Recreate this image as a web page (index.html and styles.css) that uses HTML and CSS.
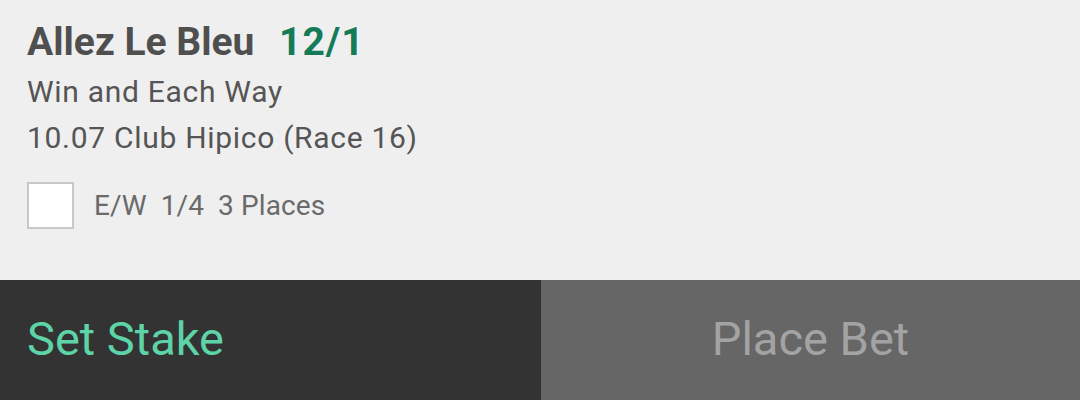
FILE: index.html
```html
<!DOCTYPE html>
<html>

<head>
  <link rel="stylesheet" href="styles.css">
</head>

<body>
  <div class="slip">
    <div class="details">
      <h1 class="selection">Allez Le Bleu <span class="odds">12/1</span></h1>
      <div class="bet-type">Win and Each Way</div>
      <div class="event">10.07 Club Hipico (Race 16)</div>

      <label class="each-way">
        <span class="box"></span>
        <span class="terms">E/W&nbsp; 1/4&nbsp; 3 Places</span>
      </label>
    </div>

    <div class="actions">
      <button class="stake-btn">Set Stake</button>
      <button class="place-btn">Place Bet</button>
    </div>
  </div>
</body>

</html>
```

FILE: styles.css
```css
* {
  margin: 0;
  padding: 0;
  box-sizing: border-box;
}

body {
  width: 1080px;
  height: 400px;
  overflow: hidden;
  font-family: Roboto, "Liberation Sans", sans-serif;
  background-color: #efefef;
}

.slip {
  display: flex;
  flex-direction: column;
  height: 400px;
}

.details {
  height: 280px;
  padding: 19px 27px 0;
}

.selection {
  font-size: 39px;
  font-weight: bold;
  line-height: 46px;
  color: #4f4f4f;
}

.odds {
  margin-left: 15px;
  letter-spacing: 1px;
  color: #137b58;
}

.bet-type,
.event {
  font-size: 30px;
  line-height: 46px;
  letter-spacing: 0.7px;
  color: #555555;
}

.bet-type {
  margin-top: 4px;
}

.each-way {
  display: flex;
  align-items: center;
  margin-top: 21px;
}

.box {
  width: 47px;
  height: 47px;
  border: 2px solid #c8c8c8;
  background-color: #ffffff;
}

.terms {
  margin-left: 20px;
  font-size: 28px;
  letter-spacing: 0.1px;
  color: #6a6a6a;
}

.actions {
  display: flex;
  height: 120px;
}

.actions button {
  padding-bottom: 3px;
  border: none;
  font-family: Roboto, "Liberation Sans", sans-serif;
  font-size: 47px;
}

.stake-btn {
  width: 541px;
  padding-left: 27px;
  text-align: left;
  background-color: #333333;
  color: #5dd3a8;
}

.place-btn {
  flex: 1;
  text-align: center;
  background-color: #666666;
  color: #a3a3a3;
}
```
